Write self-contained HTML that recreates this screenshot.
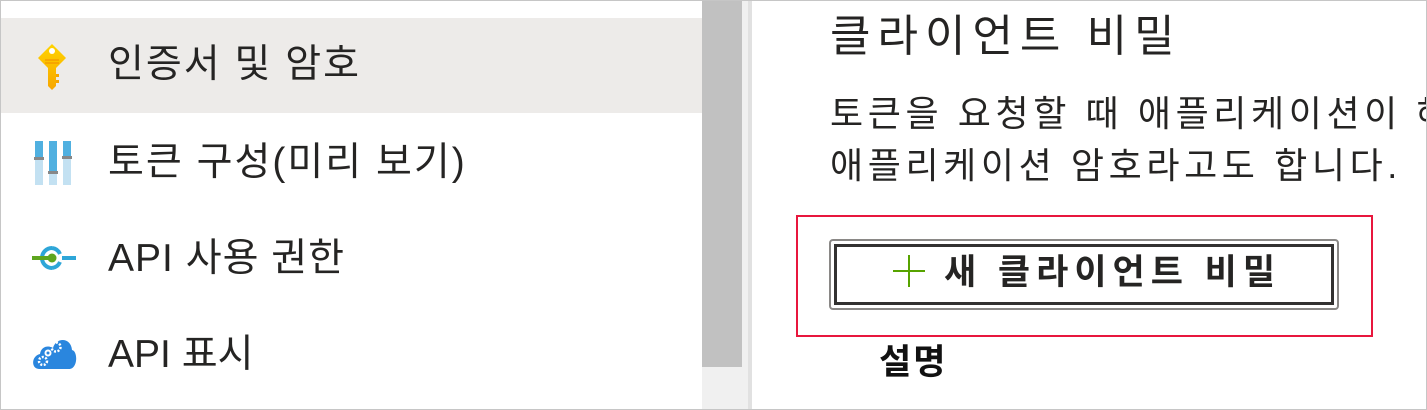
<!DOCTYPE html>
<html><head><meta charset="utf-8"><style>
*{margin:0;padding:0;box-sizing:border-box}
body{width:1427px;height:410px;overflow:hidden;background:#fff;font-family:"Liberation Sans","Noto Sans CJK KR",sans-serif;color:#252423;position:relative}
.frame{position:absolute;left:0;top:0;width:1427px;height:410px;border:1px solid #c6c6c6}
.sel{position:absolute;left:1px;top:18px;width:701px;height:95px;background:#edebe9}
.item{position:absolute;left:108px;font-size:39px;line-height:42px;white-space:nowrap;color:#252423;letter-spacing:4px}
.ico{position:absolute}
.track{position:absolute;left:702px;top:1px;width:46px;height:408px;background:#f0f0f0}
.thumb{position:absolute;left:702px;top:1px;width:40px;height:366px;background:#c1c1c1}
.div{position:absolute;left:748px;top:1px;width:4px;height:408px;background:#e1e1e1}
.t{position:absolute;white-space:nowrap}
</style></head><body>
<div class="sel"></div>
<div class="track"></div><div class="thumb"></div><div class="div"></div>

<svg class="ico" style="left:36px;top:42px" width="32" height="48" viewBox="0 0 32 48">
<defs><linearGradient id="k" x1="0" y1="0" x2="0" y2="1"><stop offset="0" stop-color="#ffd400"/><stop offset="1" stop-color="#f7a600"/></linearGradient></defs>
<path d="M16 2 L30 16 L20 26 L20 44 L16 48 L12 44 L12 26 L2 16 Z" fill="url(#k)"/>
<circle cx="16" cy="9" r="3" fill="#fff"/>
<path d="M9 18h14M9 21h14" stroke="#f08a00" stroke-width="1"/>
<path d="M20 32h3v3h-3zM20 38h3v3h-3z" fill="#f7a600"/>
</svg>
<div class="item" style="top:44px;letter-spacing:2px">인증서 및 암호</div>

<svg class="ico" style="left:34px;top:140px" width="40" height="46" viewBox="0 0 40 46">
<rect x="1" y="1" width="8" height="44" fill="#c3e1f2"/><rect x="1" y="1" width="8" height="16" fill="#50b0e0"/><rect x="0" y="17" width="10" height="3" fill="#888"/>
<rect x="15" y="1" width="8" height="44" fill="#c3e1f2"/><rect x="15" y="1" width="8" height="30" fill="#50b0e0"/><rect x="14" y="31" width="10" height="3" fill="#888"/>
<rect x="29" y="1" width="8" height="44" fill="#c3e1f2"/><rect x="29" y="1" width="8" height="16" fill="#50b0e0"/><rect x="28" y="16" width="10" height="3" fill="#888"/>
</svg>
<div class="item" style="top:142px;letter-spacing:2px">토큰 구성(미리 보기)</div>

<svg class="ico" style="left:32px;top:245px" width="44" height="26" viewBox="0 0 44 26">
<path d="M20 3 A10 10 0 1 0 20 23" fill="none" stroke="#2ea6d8" stroke-width="4"/>
<path d="M20 3 A10 10 0 0 1 28 9 M20 23 A10 10 0 0 0 28 17" fill="none" stroke="#2ea6d8" stroke-width="4"/>
<rect x="30" y="11" width="14" height="4" fill="#2ea6d8"/>
<rect x="0" y="11" width="20" height="4" fill="#5ea51f"/><circle cx="20" cy="13" r="4.5" fill="#5ea51f"/>
</svg>
<div class="item" style="top:238px;letter-spacing:1px">API 사용 권한</div>

<svg class="ico" style="left:31px;top:334px" width="46" height="36" viewBox="0 0 46 36">
<path d="M8 35 C0 35 0 22 9 20 C10 12 18 11 22 14 C25 3 40 3 41 16 C47 17 47 35 38 35 Z" fill="#2a86de"/>
<circle cx="12" cy="27" r="4" fill="none" stroke="#fff" stroke-width="2.5" stroke-dasharray="2 1.5"/>
<circle cx="25" cy="13" r="4.5" fill="none" stroke="#fff" stroke-width="2.5" stroke-dasharray="2 1.5"/>
<circle cx="17" cy="19" r="2.5" fill="none" stroke="#fff" stroke-width="2"/>
</svg>
<div class="item" style="top:334px;letter-spacing:0px">API 표시</div>

<div class="t" style="left:830px;top:12px;font-size:44px;line-height:50px;letter-spacing:7px;color:#252423">클라이언트 비밀</div>
<div class="t" style="left:830px;top:94px;font-size:36px;line-height:40px;letter-spacing:4.6px;color:#252423">토큰을 요청할 때 애플리케이션이 해</div>
<div class="t" style="left:830px;top:146px;font-size:36px;line-height:40px;letter-spacing:4.6px;color:#252423">애플리케이션 암호라고도 합니다.</div>

<div style="position:absolute;left:796px;top:215px;width:577px;height:122px;border:2px solid #e8173d"></div>
<div style="position:absolute;left:829px;top:239px;width:510px;height:71px;border:2px solid #8a8886;border-radius:4px"></div>
<div style="position:absolute;left:834px;top:244px;width:500px;height:61px;border:3px solid #323130"></div>
<svg class="ico" style="left:893px;top:255px" width="32" height="32"><path d="M0 16h32M16 0v32" stroke="#57a300" stroke-width="2"/></svg>
<div class="t" style="left:944px;top:253px;font-size:35px;line-height:40px;font-weight:bold;letter-spacing:6px;color:#252423">새 클라이언트 비밀</div>
<div class="t" style="left:879px;top:343px;font-size:35px;line-height:40px;font-weight:bold;letter-spacing:2px;color:#111">설명</div>

<div class="frame"></div>
</body></html>
